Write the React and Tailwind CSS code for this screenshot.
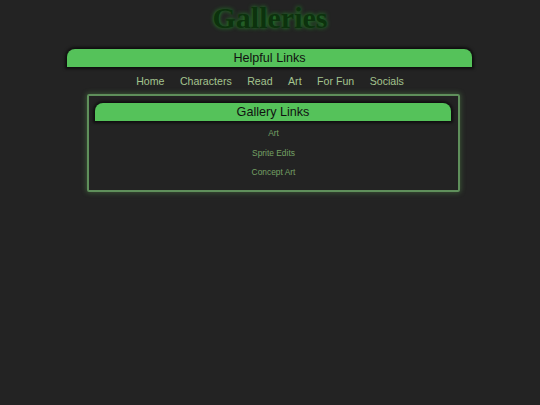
export default function App() {
  const nav = ["Home", "Characters", "Read", "Art", "For Fun", "Socials"];
  const links = ["Art", "Sprite Edits", "Concept Art"];
  return (
    <div className="w-[540px] h-[405px] bg-[#232323] overflow-hidden" style={{ fontFamily: '"Liberation Sans", Arial, sans-serif' }}>
      <div className="h-[35px] flex items-center justify-center pt-[1px]">
        <h1
          className="text-[30px] font-bold leading-none text-[#0c320d]"
          style={{ fontFamily: '"Liberation Serif", "Times New Roman", serif', textShadow: "0 0 4px #25912b" }}
        >
          Galleries
        </h1>
      </div>
      <div className="mt-[14px] ml-[67px] w-[405px] h-[18px] bg-[#55c25a] rounded-t-[8px] flex items-center justify-center text-[12.6px] text-[#111] shadow-[0_0_3px_2px_rgba(0,0,0,0.6)]">
        Helpful Links
      </div>
      <div className="mt-[6px] h-[16px] flex justify-center gap-[15.5px] text-[10.6px] text-[#a3c48f] leading-[16px]">
        {nav.map((n) => (
          <span key={n}>{n}</span>
        ))}
      </div>
      <div className="mt-[5px] ml-[87px] w-[373px] h-[98px] border-2 border-[#5f8f5b] rounded-[2px] shadow-[0_0_5px_1px_rgba(100,170,90,0.35)] px-[6px] pt-[7px]">
        <div className="w-[356px] h-[18px] bg-[#55c25a] rounded-t-[8px] flex items-center justify-center text-[12.6px] text-[#111] shadow-[0_0_3px_2px_rgba(0,0,0,0.6)]">
          Gallery Links
        </div>
        <div className="flex flex-col items-center text-[8.4px] text-[#74a064] mt-[7px] gap-[9px] leading-[10.5px]">
          {links.map((l) => (
            <span key={l}>{l}</span>
          ))}
        </div>
      </div>
    </div>
  );
}
